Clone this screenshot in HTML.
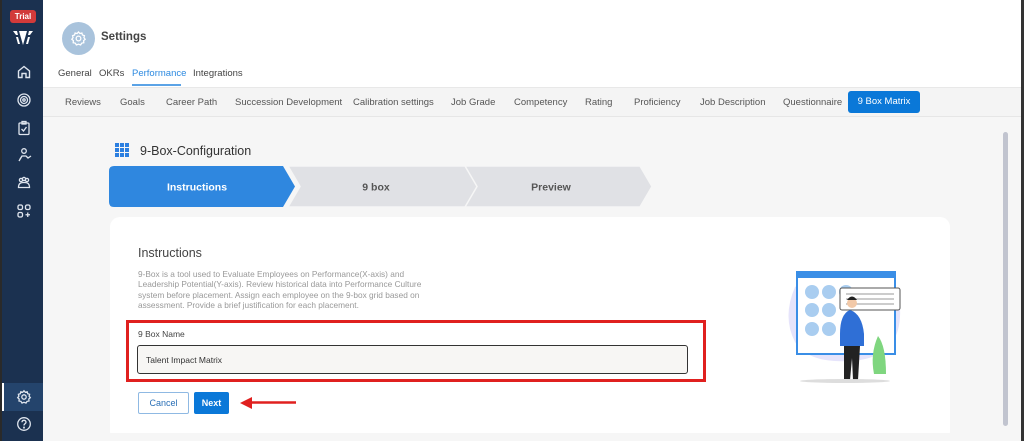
<!DOCTYPE html>
<html><head><meta charset="utf-8"><style>
*{margin:0;padding:0;box-sizing:border-box}
body{width:1024px;height:441px;overflow:hidden;position:relative;background:#f6f6f6;font-family:"Liberation Sans",Arial,sans-serif}
.a{position:absolute}
.side{left:0;top:0;width:43px;height:441px;background:#1b3150;border-left:2px solid #2a2a2a}
.ic{position:absolute;left:14px;width:16px;height:16px}
.tab{position:absolute;top:97px;font-size:9.5px;color:#555}
.top{position:absolute;top:68px;font-size:9.5px;color:#444}
</style></head><body>
<div class="a side">
  <div class="a" style="left:8px;top:10px;width:26px;height:13px;background:#d23a3a;border-radius:3px;color:#fff;font-size:8px;font-weight:bold;text-align:center;line-height:13px">Trial</div>
  <svg class="a" style="left:11px;top:31px" width="20" height="14" viewBox="0 0 20 14" fill="#fff"><path d="M0 0H4L5 4 3 4Z"/><path d="M6 0H14L10 14Z"/><path d="M16 0H20L17 4 15 4Z"/><path d="M3 6H5L7 13 5 13Z"/><path d="M15 6H17L15 13 13 13Z"/></svg>
  <svg class="ic" style="top:64px" viewBox="0 0 16 16" fill="none" stroke="#dfe5ee" stroke-width="1.4"><path d="M2.5 7 8 2.5 13.5 7V13.5H10V9.5H6V13.5H2.5Z"/></svg>
  <svg class="ic" style="top:92px" viewBox="0 0 16 16" fill="none" stroke="#dfe5ee" stroke-width="1.3"><circle cx="8" cy="8" r="6"/><circle cx="8" cy="8" r="3.5"/><circle cx="8" cy="8" r="1.2"/></svg>
  <svg class="ic" style="top:120px" viewBox="0 0 16 16" fill="none" stroke="#dfe5ee" stroke-width="1.3"><rect x="3" y="3" width="10" height="11.5" rx="1"/><rect x="6" y="1.5" width="4" height="2.5"/><path d="M5.5 9 7.5 11 10.5 7"/></svg>
  <svg class="ic" style="top:147px" viewBox="0 0 16 16" fill="none" stroke="#dfe5ee" stroke-width="1.3"><circle cx="8" cy="4" r="2.3"/><path d="M3 14 6 9H10L12 11 15 9M6 9 4 12"/></svg>
  <svg class="ic" style="top:175px" viewBox="0 0 16 16" fill="none" stroke="#dfe5ee" stroke-width="1.3"><circle cx="5" cy="5" r="1.6"/><circle cx="11" cy="5" r="1.6"/><circle cx="8" cy="4" r="1.6"/><path d="M2.5 12.5C2.5 8 5 7.5 8 7.5S13.5 8 13.5 12.5Z"/></svg>
  <svg class="ic" style="top:203px" viewBox="0 0 16 16" fill="none" stroke="#dfe5ee" stroke-width="1.3"><rect x="2" y="2" width="4.5" height="4.5" rx="1.5"/><rect x="9.5" y="2" width="4.5" height="4.5" rx="1.5"/><rect x="2" y="9.5" width="4.5" height="4.5" rx="1.5"/><path d="M11.75 9.5V14M9.5 11.75H14"/></svg>
  <div class="a" style="left:0;top:383px;width:41px;height:28px;background:#24446c;border-left:2px solid #fff"></div>
  <svg class="ic" style="top:389px" viewBox="0 0 16 16" fill="none" stroke="#dfe5ee" stroke-width="1.3"><circle cx="8" cy="8" r="2.2"/><path d="M8 1.8 9.3 3.3 11.2 2.8 11.7 4.7 13.6 5.3 13.1 7.2 14.3 8.7 12.8 10 13 12 11 12.4 10 14.1 8 13.3 6 14.1 5 12.4 3 12 3.2 10 1.7 8.7 2.9 7.2 2.4 5.3 4.3 4.7 4.8 2.8 6.7 3.3Z"/></svg>
  <svg class="ic" style="top:416px" viewBox="0 0 16 16" fill="none" stroke="#dfe5ee" stroke-width="1.3"><circle cx="8" cy="8" r="6.3"/><path d="M6 6.3C6 4.8 7 4.3 8 4.3S10 5 10 6.2C10 7.6 8 7.8 8 9.5"/><circle cx="8" cy="11.6" r=".4"/></svg>
</div>
<div class="a" style="left:43px;top:0;width:978px;height:87px;background:#fff"></div>
<div class="a" style="left:62px;top:22px;width:33px;height:33px;border-radius:50%;background:#a9c3dc"></div>
<svg class="a" style="left:70px;top:30px" width="17" height="17" viewBox="0 0 16 16" fill="none" stroke="#fff" stroke-width="1.2"><circle cx="8" cy="8" r="2.2"/><path d="M8 1.8 9.3 3.3 11.2 2.8 11.7 4.7 13.6 5.3 13.1 7.2 14.3 8.7 12.8 10 13 12 11 12.4 10 14.1 8 13.3 6 14.1 5 12.4 3 12 3.2 10 1.7 8.7 2.9 7.2 2.4 5.3 4.3 4.7 4.8 2.8 6.7 3.3Z"/></svg>
<div class="a" style="left:101px;top:31px;font-size:11.5px;font-weight:bold;color:#444">Settings</div>
<div class="top" style="left:58px">General</div>
<div class="top" style="left:99px">OKRs</div>
<div class="top" style="left:132px;color:#2d8ae0">Performance</div>
<div class="top" style="left:193px">Integrations</div>
<div class="a" style="left:132px;top:84px;width:49px;height:2px;background:#5ba3e6"></div>
<div class="a" style="left:43px;top:87px;width:978px;height:30px;background:#f4f4f4;border-top:1px solid #e8e8e8;border-bottom:1px solid #e6e6e6"></div>
<div class="tab" style="left:65px">Reviews</div>
<div class="tab" style="left:120px">Goals</div>
<div class="tab" style="left:166px">Career Path</div>
<div class="tab" style="left:235px">Succession Development</div>
<div class="tab" style="left:353px">Calibration settings</div>
<div class="tab" style="left:451px">Job Grade</div>
<div class="tab" style="left:514px">Competency</div>
<div class="tab" style="left:585px">Rating</div>
<div class="tab" style="left:634px">Proficiency</div>
<div class="tab" style="left:700px">Job Description</div>
<div class="tab" style="left:783px">Questionnaire</div>
<div class="a" style="left:848px;top:91px;width:72px;height:22px;background:#0a78d8;border-radius:3px;color:#fff;font-size:9.5px;text-align:center;line-height:22px">9 Box Matrix</div>
<svg class="a" style="left:115px;top:143px" width="14" height="14" viewBox="0 0 14 14" fill="#2c7fe0"><rect x="0" y="0" width="4" height="4"/><rect x="5" y="0" width="4" height="4"/><rect x="10" y="0" width="4" height="4"/><rect x="0" y="5" width="4" height="4"/><rect x="5" y="5" width="4" height="4"/><rect x="10" y="5" width="4" height="4"/><rect x="0" y="10" width="4" height="4"/><rect x="5" y="10" width="4" height="4"/><rect x="10" y="10" width="4" height="4"/></svg>
<div class="a" style="left:140px;top:144px;font-size:12.5px;color:#333">9-Box-Configuration</div>
<svg class="a" style="left:108px;top:165px" width="545" height="43" viewBox="0 0 545 43">
<path d="M355 1H532L544 21.5 532 42H355L367 21.5Z" fill="#e0e1e5" stroke="#f6f6f6" stroke-width="1.5"/>
<path d="M180 1H357L369 21.5 357 42H180L192 21.5Z" fill="#e0e1e5" stroke="#f6f6f6" stroke-width="1.5"/>
<path d="M6 1H175L187 21.5 175 42H6Q1 42 1 37V6Q1 1 6 1Z" fill="#2f87df"/>
<text x="89" y="25.5" text-anchor="middle" font-size="10.5" font-weight="bold" fill="#fff" font-family="Liberation Sans">Instructions</text>
<text x="268" y="25.5" text-anchor="middle" font-size="10.5" font-weight="bold" fill="#555" font-family="Liberation Sans">9 box</text>
<text x="443" y="25.5" text-anchor="middle" font-size="10.5" font-weight="bold" fill="#555" font-family="Liberation Sans">Preview</text>
</svg>
<div class="a" style="left:110px;top:217px;width:840px;height:224px;background:#fff;border-radius:10px"></div>
<div class="a" style="left:138px;top:246px;font-size:12.5px;color:#444">Instructions</div>
<div class="a" style="left:138px;top:269px;width:300px;font-size:8.3px;line-height:10.3px;color:#999">9-Box is a tool used to Evaluate Employees on Performance(X-axis) and Leadership Potential(Y-axis). Review historical data into Performance Culture system before placement. Assign each employee on the 9-box grid based on assessment. Provide a brief justification for each placement.</div>
<div class="a" style="left:126px;top:320px;width:580px;height:62px;border:3px solid #e0201f"></div>
<div class="a" style="left:138px;top:329px;font-size:8.5px;color:#444">9 Box Name</div>
<div class="a" style="left:137px;top:345px;width:551px;height:29px;background:#f7f6f4;border:1.5px solid #333;border-radius:3px;font-size:8.5px;color:#333;padding:9px 0 0 8px">Talent Impact Matrix</div>
<div class="a" style="left:138px;top:392px;width:51px;height:22px;border:1px solid #8fb9e3;border-radius:2px;font-size:9px;color:#2a6fb6;text-align:center;line-height:20px">Cancel</div>
<div class="a" style="left:194px;top:392px;width:35px;height:22px;background:#0a78d8;border-radius:2px;font-size:9px;font-weight:bold;color:#fff;text-align:center;line-height:22px">Next</div>
<svg class="a" style="left:236px;top:396px" width="62" height="14"><path d="M60 6.5H14" stroke="#e0201f" stroke-width="2.5"/><path d="M4 7 16 1V13Z" fill="#e0201f"/></svg>
<div class="a" style="left:110px;top:433px;width:840px;height:8px;background:#f6f6f6"></div>
<svg class="a" style="left:780px;top:262px" width="130" height="122" viewBox="0 0 130 122">
<path d="M15 25Q45 5 95 12Q122 22 120 55Q118 92 80 98Q30 104 15 80Q2 55 15 25Z" fill="#e6e4fb"/>
<rect x="17" y="10" width="98" height="82" fill="#fff" stroke="#3a8ee6" stroke-width="2"/>
<rect x="17" y="10" width="98" height="6" fill="#3a8ee6"/>
<g fill="#a9cdf0"><circle cx="32" cy="30" r="7"/><circle cx="49" cy="30" r="7"/><circle cx="66" cy="30" r="7"/><circle cx="32" cy="48" r="7"/><circle cx="49" cy="48" r="7"/><circle cx="32" cy="67" r="7"/><circle cx="49" cy="67" r="7"/></g>
<rect x="60" y="26" width="60" height="22" rx="2" fill="#fff" stroke="#555"/>
<path d="M66 32H114M66 37H114M66 42H114" stroke="#999"/>
<path d="M94 112Q90 92 98 74Q106 84 106 112Z" fill="#7fd67f"/>
<path d="M70 48Q60 52 60 72V84H84V72Q82 52 70 48Z" fill="#2f6fd6"/>
<path d="M64 84H80L78 118H73L72 96 70 118H64Z" fill="#222"/>
<circle cx="72" cy="41" r="5" fill="#f2c9a8"/><path d="M67 38Q72 31 77 38Z" fill="#222"/>
<ellipse cx="65" cy="119" rx="45" ry="2" fill="#ddd"/>
</svg>
<div class="a" style="left:1003px;top:132px;width:5px;height:294px;background:#c1c4cf;border-radius:3px"></div>
<div class="a" style="left:1021px;top:0;width:3px;height:441px;background:#333"></div>
</body></html>
